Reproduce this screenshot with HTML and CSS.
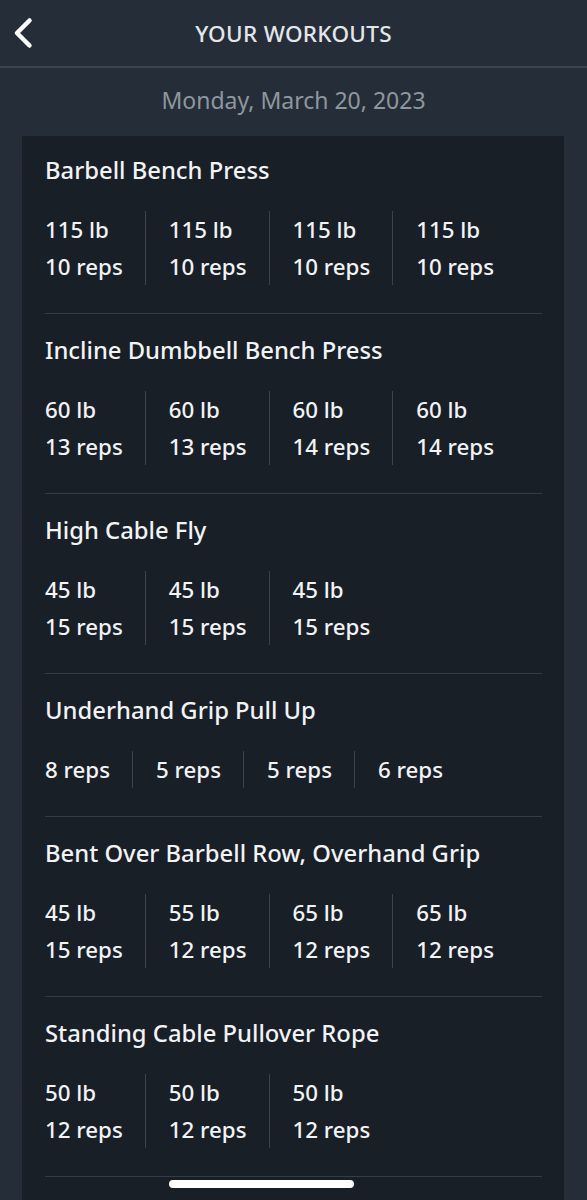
FILE: index.html
```html
<!DOCTYPE html>
<html lang="en">
<head>
  <meta charset="UTF-8" />
  <meta name="viewport" content="width=device-width, initial-scale=1.0"/>
  <title>Your Workouts</title>
  <link rel="stylesheet" href="styles.css">
</head>
<body>

  <header class="topbar">
    <button class="back" aria-label="Back">
      <svg width="22" height="34" viewBox="0 0 22 34">
        <path d="M17.5 4.5 L5 17 L17.5 29.5" fill="none" stroke="#fff" stroke-width="4.5" stroke-linecap="round" stroke-linejoin="round"/>
      </svg>
    </button>
    <h1>YOUR WORKOUTS</h1>
  </header>

  <div class="date">Monday, March 20, 2023</div>

  <main class="card" id="workouts"></main>

  <div class="home-bar"></div>

  <script>
    const workouts = [
      { name: "Barbell Bench Press", sets: [[115, 10], [115, 10], [115, 10], [115, 10]] },
      { name: "Incline Dumbbell Bench Press", sets: [[60, 13], [60, 13], [60, 14], [60, 14]] },
      { name: "High Cable Fly", sets: [[45, 15], [45, 15], [45, 15]] },
      { name: "Underhand Grip Pull Up", sets: [[null, 8], [null, 5], [null, 5], [null, 6]] },
      { name: "Bent Over Barbell Row, Overhand Grip", sets: [[45, 15], [55, 12], [65, 12], [65, 12]] },
      { name: "Standing Cable Pullover Rope", sets: [[50, 12], [50, 12], [50, 12]] }
    ];

    const card = document.getElementById("workouts");

    workouts.forEach(w => {
      const section = document.createElement("section");
      section.className = "exercise";

      const title = document.createElement("h2");
      title.textContent = w.name;
      section.appendChild(title);

      const row = document.createElement("div");
      row.className = "sets";
      w.sets.forEach(([weight, reps]) => {
        const set = document.createElement("div");
        set.className = "set";
        if (weight !== null) {
          const wt = document.createElement("span");
          wt.textContent = `${weight} lb`;
          set.appendChild(wt);
        }
        const rp = document.createElement("span");
        rp.textContent = `${reps} reps`;
        set.appendChild(rp);
        row.appendChild(set);
      });
      section.appendChild(row);
      card.appendChild(section);
    });
  </script>
</body>
</html>
```

FILE: styles.css
```css
body {
  font-family: 'Noto Sans', sans-serif;
  background: #252e38;
  color: #f1f3f5;
  margin: 0;
  padding: 0;
  height: 1200px;
  overflow: hidden;
}
.topbar {
  height: 66px;
  border-bottom: 2px solid #3a4551;
  display: flex;
  align-items: center;
  justify-content: center;
  position: relative;
}
.topbar h1 {
  margin: 0;
  font-size: 22.5px;
  font-weight: 500;
  letter-spacing: 0.3px;
  color: #e3e7ea;
}
.back {
  position: absolute;
  left: 12px;
  top: 16px;
  background: none;
  border: none;
  padding: 0;
}
.date {
  text-align: center;
  color: #8e979f;
  font-size: 23px;
  height: 68px;
  line-height: 64px;
}
.card {
  background: #181f27;
  margin: 0 23px 0 22px;
  padding: 0 22px 0 23px;
  height: 1070px;
}
.exercise {
  padding: 21px 0 28px;
  border-bottom: 1px solid #343d47;
}
.exercise:first-child {
  padding-top: 19px;
}
.exercise h2 {
  margin: 0 0 26px;
  font-size: 23.8px;
  font-weight: 500;
  line-height: 30px;
}
.sets {
  display: flex;
}
.set {
  display: flex;
  flex-direction: column;
  padding: 0 22px 0 23px;
  border-left: 1px solid #3b444e;
  font-size: 22.3px;
  font-weight: 500;
  line-height: 37px;
}
.set:first-child {
  padding-left: 0;
  border-left: none;
}
.home-bar {
  position: absolute;
  left: 169px;
  top: 1180px;
  width: 185px;
  height: 8px;
  border-radius: 4px;
  background: #fff;
}
```
